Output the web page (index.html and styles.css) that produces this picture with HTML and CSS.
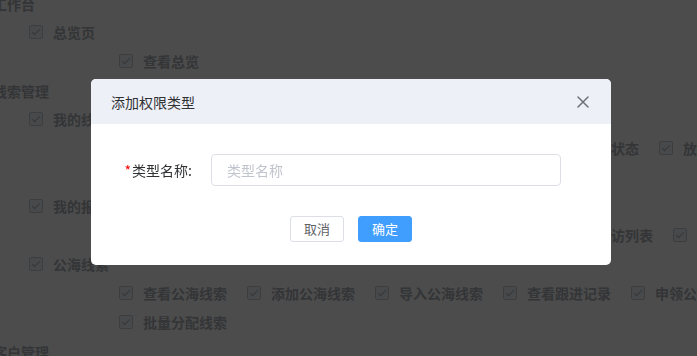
FILE: index.html
```html
<!doctype html>
<html lang="zh-CN">
	<head>
		<meta charset="UTF-8" />
		<meta name="viewport" content="width=device-width, initial-scale=1.0" />
		<title>权限管理</title>
		<link rel="stylesheet" href="styles.css">
	</head>
	<body>
		<div class="perm-tree">
			<div class="group-title">工作台</div>
			<div class="row level-1">
				<label class="check"><span class="box"></span>总览页</label>
			</div>
			<div class="row level-2">
				<label class="check"><span class="box"></span>查看总览</label>
			</div>

			<div class="group-title">线索管理</div>
			<div class="row level-1">
				<label class="check"><span class="box"></span>我的线索</label>
			</div>
			<div class="row level-2">
				<label class="check"><span class="box"></span>查看我的线索</label>
				<label class="check"><span class="box"></span>添加我的线索</label>
				<label class="check"><span class="box"></span>编辑我的线索</label>
				<label class="check"><span class="box"></span>修改线索跟进状态</label>
				<label class="check"><span class="box"></span>放弃线索</label>
			</div>
			<div class="row level-2">
				<label class="check"><span class="box"></span>转移线索</label>
				<label class="check"><span class="box"></span>删除线索</label>
			</div>
			<div class="row level-1">
				<label class="check"><span class="box"></span>我的报备</label>
			</div>
			<div class="row level-2">
				<label class="check"><span class="box"></span>查看报备详情页</label>
				<label class="check"><span class="box"></span>新增报备记录</label>
				<label class="check"><span class="box"></span>审核报备记录</label>
				<label class="check"><span class="box"></span>查看客户回访列表</label>
				<label class="check"><span class="box"></span>导出报备</label>
			</div>
			<div class="row level-1">
				<label class="check"><span class="box"></span>公海线索</label>
			</div>
			<div class="row level-2">
				<label class="check"><span class="box"></span>查看公海线索</label>
				<label class="check"><span class="box"></span>添加公海线索</label>
				<label class="check"><span class="box"></span>导入公海线索</label>
				<label class="check"><span class="box"></span>查看跟进记录</label>
				<label class="check"><span class="box"></span>申领公海线索</label>
			</div>
			<div class="row level-2">
				<label class="check"><span class="box"></span>批量分配线索</label>
			</div>

			<div class="group-title">客户管理</div>
		</div>

		<div class="modal-mask">
			<div class="dialog">
				<div class="dialog-header">
					<span class="dialog-title">添加权限类型</span>
					<button class="dialog-close" aria-label="关闭">
						<svg width="12" height="12" viewBox="0 0 12 12" fill="none" xmlns="http://www.w3.org/2000/svg">
							<path d="M1 1L11 11M11 1L1 11" stroke="currentColor" stroke-width="1.5" stroke-linecap="round" />
						</svg>
					</button>
				</div>
				<div class="dialog-body">
					<div class="form-item">
						<label class="form-label" for="type-name"><span class="required">*</span>类型名称:</label>
						<input id="type-name" class="form-input" type="text" placeholder="类型名称" />
					</div>
				</div>
				<div class="dialog-footer">
					<button class="btn">取消</button>
					<button class="btn btn-primary">确定</button>
				</div>
			</div>
		</div>
	</body>
</html>
```

FILE: styles.css
```css
html,
body {
	height: 100%;
}
body {
	margin: 0;
	overflow: hidden;
	font-family: "Noto Sans CJK SC", "Noto Sans", sans-serif;
	font-size: 14px;
	color: #303133;
	background-color: #fff;
}

/* background permission tree (disabled) */
.perm-tree {
	margin: -10px 0 0 -7px;
	color: #aeb1b8;
	font-weight: 700;
}
.group-title {
	height: 29px;
	line-height: 29px;
}
.row {
	display: flex;
	align-items: center;
	height: 29px;
	box-sizing: border-box;
	padding-bottom: 4px;
	white-space: nowrap;
}
.level-1 {
	padding-left: 36px;
}
.level-2 {
	padding-left: 126px;
}
.check {
	display: inline-flex;
	align-items: center;
	margin-right: 20px;
	line-height: 1;
}
.box {
	position: relative;
	width: 12px;
	height: 12px;
	margin-right: 10px;
	border: 1px solid #c8ccd4;
	border-radius: 2px;
	background-color: #f2f6fc;
	flex-shrink: 0;
}
.box:after {
	content: "";
	position: absolute;
	left: 4px;
	top: 1px;
	width: 3px;
	height: 7px;
	border: 1px solid #aeb1b8;
	border-left: 0;
	border-top: 0;
	transform: rotate(45deg);
}

/* dialog */
.modal-mask {
	position: fixed;
	top: 0;
	left: 0;
	right: 0;
	bottom: 0;
	background-color: rgba(0, 0, 0, 0.7);
	display: flex;
	justify-content: center;
	align-items: flex-start;
	padding-left: 5px;
}
.dialog {
	width: 520px;
	margin-top: 79px;
	background-color: #fff;
	border-radius: 5px;
	overflow: hidden;
}
.dialog-header {
	display: flex;
	align-items: center;
	justify-content: space-between;
	height: 45px;
	padding: 0 22px 0 20px;
	background-color: #edf0f7;
}
.dialog-title {
	font-size: 14px;
	color: #303133;
}
.dialog-close {
	display: flex;
	padding: 0;
	border: none;
	background: none;
	color: #6f7175;
	cursor: pointer;
}
.dialog-body {
	padding: 30px 0;
}
.form-item {
	display: flex;
	align-items: center;
}
.form-label {
	flex-shrink: 0;
	width: 101px;
	padding-right: 19px;
	text-align: right;
	color: #303133;
}
.required {
	color: red;
	margin-right: 1px;
}
.form-input {
	width: 350px;
	height: 32px;
	box-sizing: border-box;
	padding: 0 15px;
	border: 1px solid #dcdfe6;
	border-radius: 4px;
	font-family: inherit;
	font-size: 14px;
	color: #606266;
	outline: none;
}
.form-input::placeholder {
	color: #c0c4cc;
}
.dialog-footer {
	display: flex;
	justify-content: center;
	gap: 14px;
	padding-bottom: 23px;
}
.btn {
	height: 26px;
	padding: 0 13px;
	border: 1px solid #dcdfe6;
	border-radius: 3px;
	background-color: #fff;
	color: #606266;
	font-family: inherit;
	font-size: 13px;
	line-height: 24px;
	cursor: pointer;
}
.btn-primary {
	border-color: #409eff;
	background-color: #409eff;
	color: #fff;
}
```
